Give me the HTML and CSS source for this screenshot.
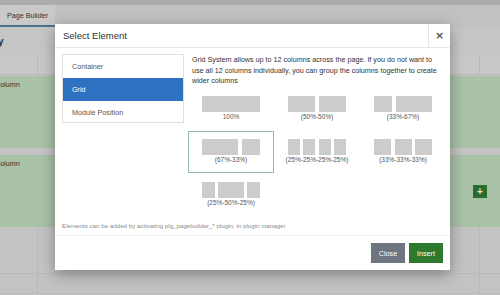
FILE: index.html
```html
<!DOCTYPE html>
<html lang="en">
<head>
    <meta charset="UTF-8">
    <meta name="viewport" content="width=device-width, initial-scale=1.0">
    <title>Page Builder - Select Element</title>
    <link rel="stylesheet" href="styles.css">
</head>
<body>
    <div class="topbar"></div>
    <div class="tabs">
        <span class="tab">Page Builder</span>
    </div>
    <div class="titulo">y</div>

    <div class="fila-cabecera">
        <div class="celda celda-izq"></div>
        <div class="celda celda-centro"></div>
        <div class="celda celda-der"></div>
    </div>

    <div class="columna">
        <span class="columna-texto">Column</span>
    </div>
    <div class="columna">
        <span class="columna-texto">Column</span>
        <span class="btn-mas">+</span>
    </div>

    <div class="fila-pie">
        <div class="celda celda-izq"></div>
        <div class="celda celda-centro"></div>
        <div class="celda celda-der"></div>
    </div>
    <div class="fila-pie fila-ultima">
        <div class="celda celda-izq"></div>
        <div class="celda celda-centro"></div>
        <div class="celda celda-der"></div>
    </div>

    <!-- Modal -->
    <div class="modal">
        <div class="modal-header">
            <h3>Select Element</h3>
            <button class="cerrar">&times;</button>
        </div>
        <div class="modal-body">
            <ul class="lista">
                <li>Container</li>
                <li class="activo">Grid</li>
                <li>Module Position</li>
            </ul>
            <div class="contenido">
                <p class="descripcion">Grid System allows up to 12 columns across the page. If you do not want to use all 12 columns individually, you can group the columns together to create wider columns</p>
                <div class="grids">
                    <div class="grid-item">
                        <div class="cajas"><span style="flex: 12"></span></div>
                        <div class="etiqueta">100%</div>
                    </div>
                    <div class="grid-item">
                        <div class="cajas"><span style="flex: 6"></span><span style="flex: 6"></span></div>
                        <div class="etiqueta">(50%-50%)</div>
                    </div>
                    <div class="grid-item">
                        <div class="cajas"><span style="flex: 4"></span><span style="flex: 8"></span></div>
                        <div class="etiqueta">(33%-67%)</div>
                    </div>
                    <div class="grid-item seleccionado">
                        <div class="cajas"><span style="flex: 8"></span><span style="flex: 4"></span></div>
                        <div class="etiqueta">(67%-33%)</div>
                    </div>
                    <div class="grid-item">
                        <div class="cajas"><span style="flex: 3"></span><span style="flex: 3"></span><span style="flex: 3"></span><span style="flex: 3"></span></div>
                        <div class="etiqueta">(25%-25%-25%-25%)</div>
                    </div>
                    <div class="grid-item">
                        <div class="cajas"><span style="flex: 4"></span><span style="flex: 4"></span><span style="flex: 4"></span></div>
                        <div class="etiqueta">(33%-33%-33%)</div>
                    </div>
                    <div class="grid-item">
                        <div class="cajas"><span style="flex: 3"></span><span style="flex: 6"></span><span style="flex: 3"></span></div>
                        <div class="etiqueta">(25%-50%-25%)</div>
                    </div>
                </div>
            </div>
        </div>
        <p class="nota">Elements can be added by activating plg_pagebuilder_* plugin, in plugin manager</p>
        <div class="modal-footer">
            <button class="btn btn-cerrar">Close</button>
            <button class="btn btn-insertar">Insert</button>
        </div>
    </div>
</body>
</html>
```

FILE: styles.css
```css
body {
    font-family: "Liberation Sans", Arial, sans-serif;
    background-color: #c4c4c4;
    margin: 0;
    padding: 0;
    width: 500px;
    height: 295px;
    overflow: hidden;
    position: relative;
    color: #333;
}

/* pagina de fondo (oscurecida) */
.topbar {
    height: 5px;
    background-color: #acacac;
}

.tabs {
    height: 22px;
    background-color: #c1c1c1;
    display: flex;
}

.tab {
    width: 55px;
    height: 20px;
    background-color: #c9c9c9;
    border-bottom: 2px solid #4a7391;
    font-size: 7.2px;
    line-height: 21px;
    text-align: center;
    color: #333;
}

.titulo {
    height: 28px;
    line-height: 30px;
    font-size: 10px;
    font-weight: bold;
    background-color: #c6c6c6;
    color: #333;
    text-indent: -2px;
}

.fila-cabecera,
.fila-pie {
    display: flex;
    height: 20px;
    background-color: #c8c8c8;
}

.fila-pie {
    height: 47px;
    background-color: #c3c3c3;
}

.fila-pie.fila-ultima {
    height: 20px;
}

.celda {
    border-right: 1px solid #b9b9b9;
    border-bottom: 1px solid #b9b9b9;
}

.celda-izq {
    width: 37px;
}

.celda-centro {
    flex: 1;
}

.celda-der {
    width: 20px;
    border-right: none;
}

.columna {
    height: 72px;
    margin-top: 7px;
    background-color: #a9c2a8;
    display: flex;
    align-items: center;
    font-size: 7.2px;
}

.fila-cabecera + .columna {
    margin-top: 1px;
}

.columna-texto {
    align-self: flex-start;
    margin-top: 4px;
    margin-left: -5px;
    color: #333;
}

.btn-mas {
    margin-left: auto;
    margin-right: 13px;
    width: 14px;
    height: 13px;
    background-color: #2c6b2e;
    color: #d9e6d9;
    font-size: 10px;
    font-weight: bold;
    line-height: 13px;
    text-align: center;
}

/* modal */
.modal {
    position: absolute;
    left: 55px;
    top: 24px;
    width: 395px;
    height: 246px;
    background-color: white;
    box-shadow: 0 4px 14px rgba(0,0,0,0.35);
    display: flex;
    flex-direction: column;
}

.modal-header {
    height: 23px;
    border-bottom: 1px solid #e8e8e8;
    display: flex;
    align-items: center;
}

.modal-header h3 {
    margin: 0 0 0 8px;
    font-size: 9.5px;
    font-weight: normal;
    color: #333;
    flex: 1;
}

.cerrar {
    width: 22px;
    height: 23px;
    border: none;
    border-left: 1px solid #e8e8e8;
    background: none;
    font-family: "DejaVu Sans", sans-serif;
    font-size: 11px;
    font-weight: bold;
    color: #555;
    padding: 0;
    line-height: 23px;
}

.modal-body {
    display: flex;
    gap: 4px;
    padding: 6px 4px 0 7px;
}

.lista {
    list-style: none;
    margin: 0;
    padding: 0;
    width: 120px;
    height: 67px;
    border: 1px solid #e0e0e0;
    align-self: flex-start;
}

.lista li {
    height: 23px;
    line-height: 23px;
    padding-left: 9px;
    font-size: 7.2px;
    color: #555;
}

.lista li.activo {
    background-color: #2f71c1;
    color: white;
}

.contenido {
    flex: 1;
}

.descripcion {
    margin: 1px 0 0;
    padding: 0 4px;
    font-size: 7.2px;
    line-height: 10.5px;
    color: #333;
}

.grids {
    display: flex;
    flex-wrap: wrap;
    row-gap: 1px;
    margin-top: 1px;
}

.grid-item {
    width: 58px;
    height: 33px;
    border: 1px solid transparent;
    padding: 7px 13px 0;
}

.grid-item.seleccionado {
    border-color: #8cbdb5;
}

.cajas {
    display: flex;
    gap: 3.5px;
    height: 16px;
}

.cajas span {
    background-color: #cccccc;
}

.etiqueta {
    font-size: 6.5px;
    text-align: center;
    color: #555;
    margin-top: 1px;
    white-space: nowrap;
    margin-left: -10px;
    margin-right: -10px;
}

.nota {
    margin: auto 0 0 7px;
    padding-bottom: 6px;
    font-size: 6.2px;
    color: #8a8a8a;
}

.modal-footer {
    border-top: 1px solid #eeeeee;
    display: flex;
    justify-content: flex-end;
    gap: 4px;
    padding: 7px 7px 7px 0;
}

.btn {
    width: 34px;
    height: 20px;
    border: none;
    font-family: "Liberation Sans", Arial, sans-serif;
    font-size: 7.2px;
    color: white;
    padding: 0;
}

.btn-cerrar {
    background-color: #6c7580;
}

.btn-insertar {
    background-color: #2d7a2f;
}
```
